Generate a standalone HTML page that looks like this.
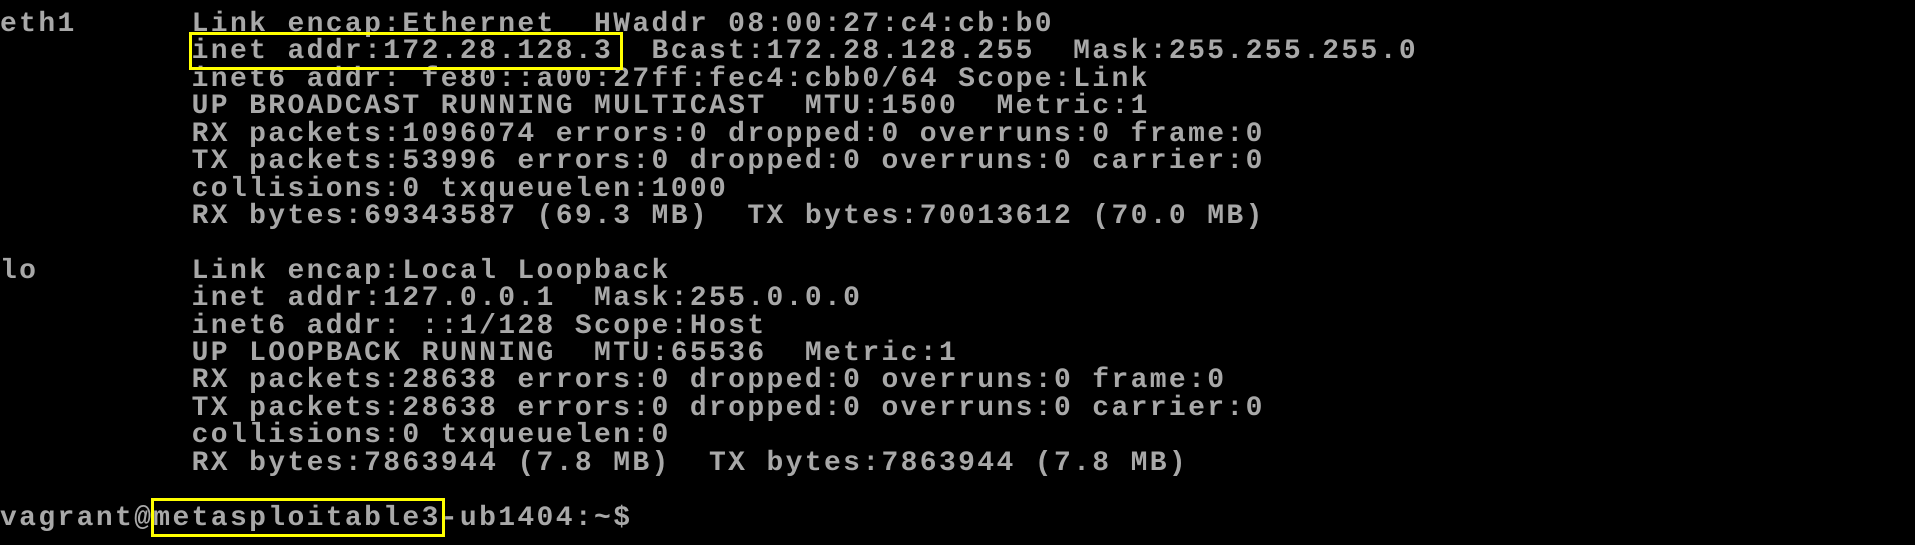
<!DOCTYPE html>
<html><head><meta charset="utf-8"><style>
html,body{margin:0;padding:0;background:#000;width:1915px;height:545px;overflow:hidden;position:relative}
pre{position:absolute;left:0;top:11px;margin:0;font-family:"Liberation Mono",monospace;font-size:28px;font-weight:bold;line-height:27.42px;letter-spacing:2.36px;color:#a8a8a8}
.b{position:absolute;border:3px solid #ffff00;box-sizing:border-box}
</style></head><body>
<pre>eth1      Link encap:Ethernet  HWaddr 08:00:27:c4:cb:b0
          inet addr:172.28.128.3  Bcast:172.28.128.255  Mask:255.255.255.0
          inet6 addr: fe80::a00:27ff:fec4:cbb0/64 Scope:Link
          UP BROADCAST RUNNING MULTICAST  MTU:1500  Metric:1
          RX packets:1096074 errors:0 dropped:0 overruns:0 frame:0
          TX packets:53996 errors:0 dropped:0 overruns:0 carrier:0
          collisions:0 txqueuelen:1000
          RX bytes:69343587 (69.3 MB)  TX bytes:70013612 (70.0 MB)

lo        Link encap:Local Loopback
          inet addr:127.0.0.1  Mask:255.0.0.0
          inet6 addr: ::1/128 Scope:Host
          UP LOOPBACK RUNNING  MTU:65536  Metric:1
          RX packets:28638 errors:0 dropped:0 overruns:0 frame:0
          TX packets:28638 errors:0 dropped:0 overruns:0 carrier:0
          collisions:0 txqueuelen:0
          RX bytes:7863944 (7.8 MB)  TX bytes:7863944 (7.8 MB)

vagrant@metasploitable3-ub1404:~$</pre>
<div class="b" style="left:189px;top:32px;width:434px;height:38px"></div>
<div class="b" style="left:151px;top:498px;width:294px;height:39px"></div>
</body></html>
